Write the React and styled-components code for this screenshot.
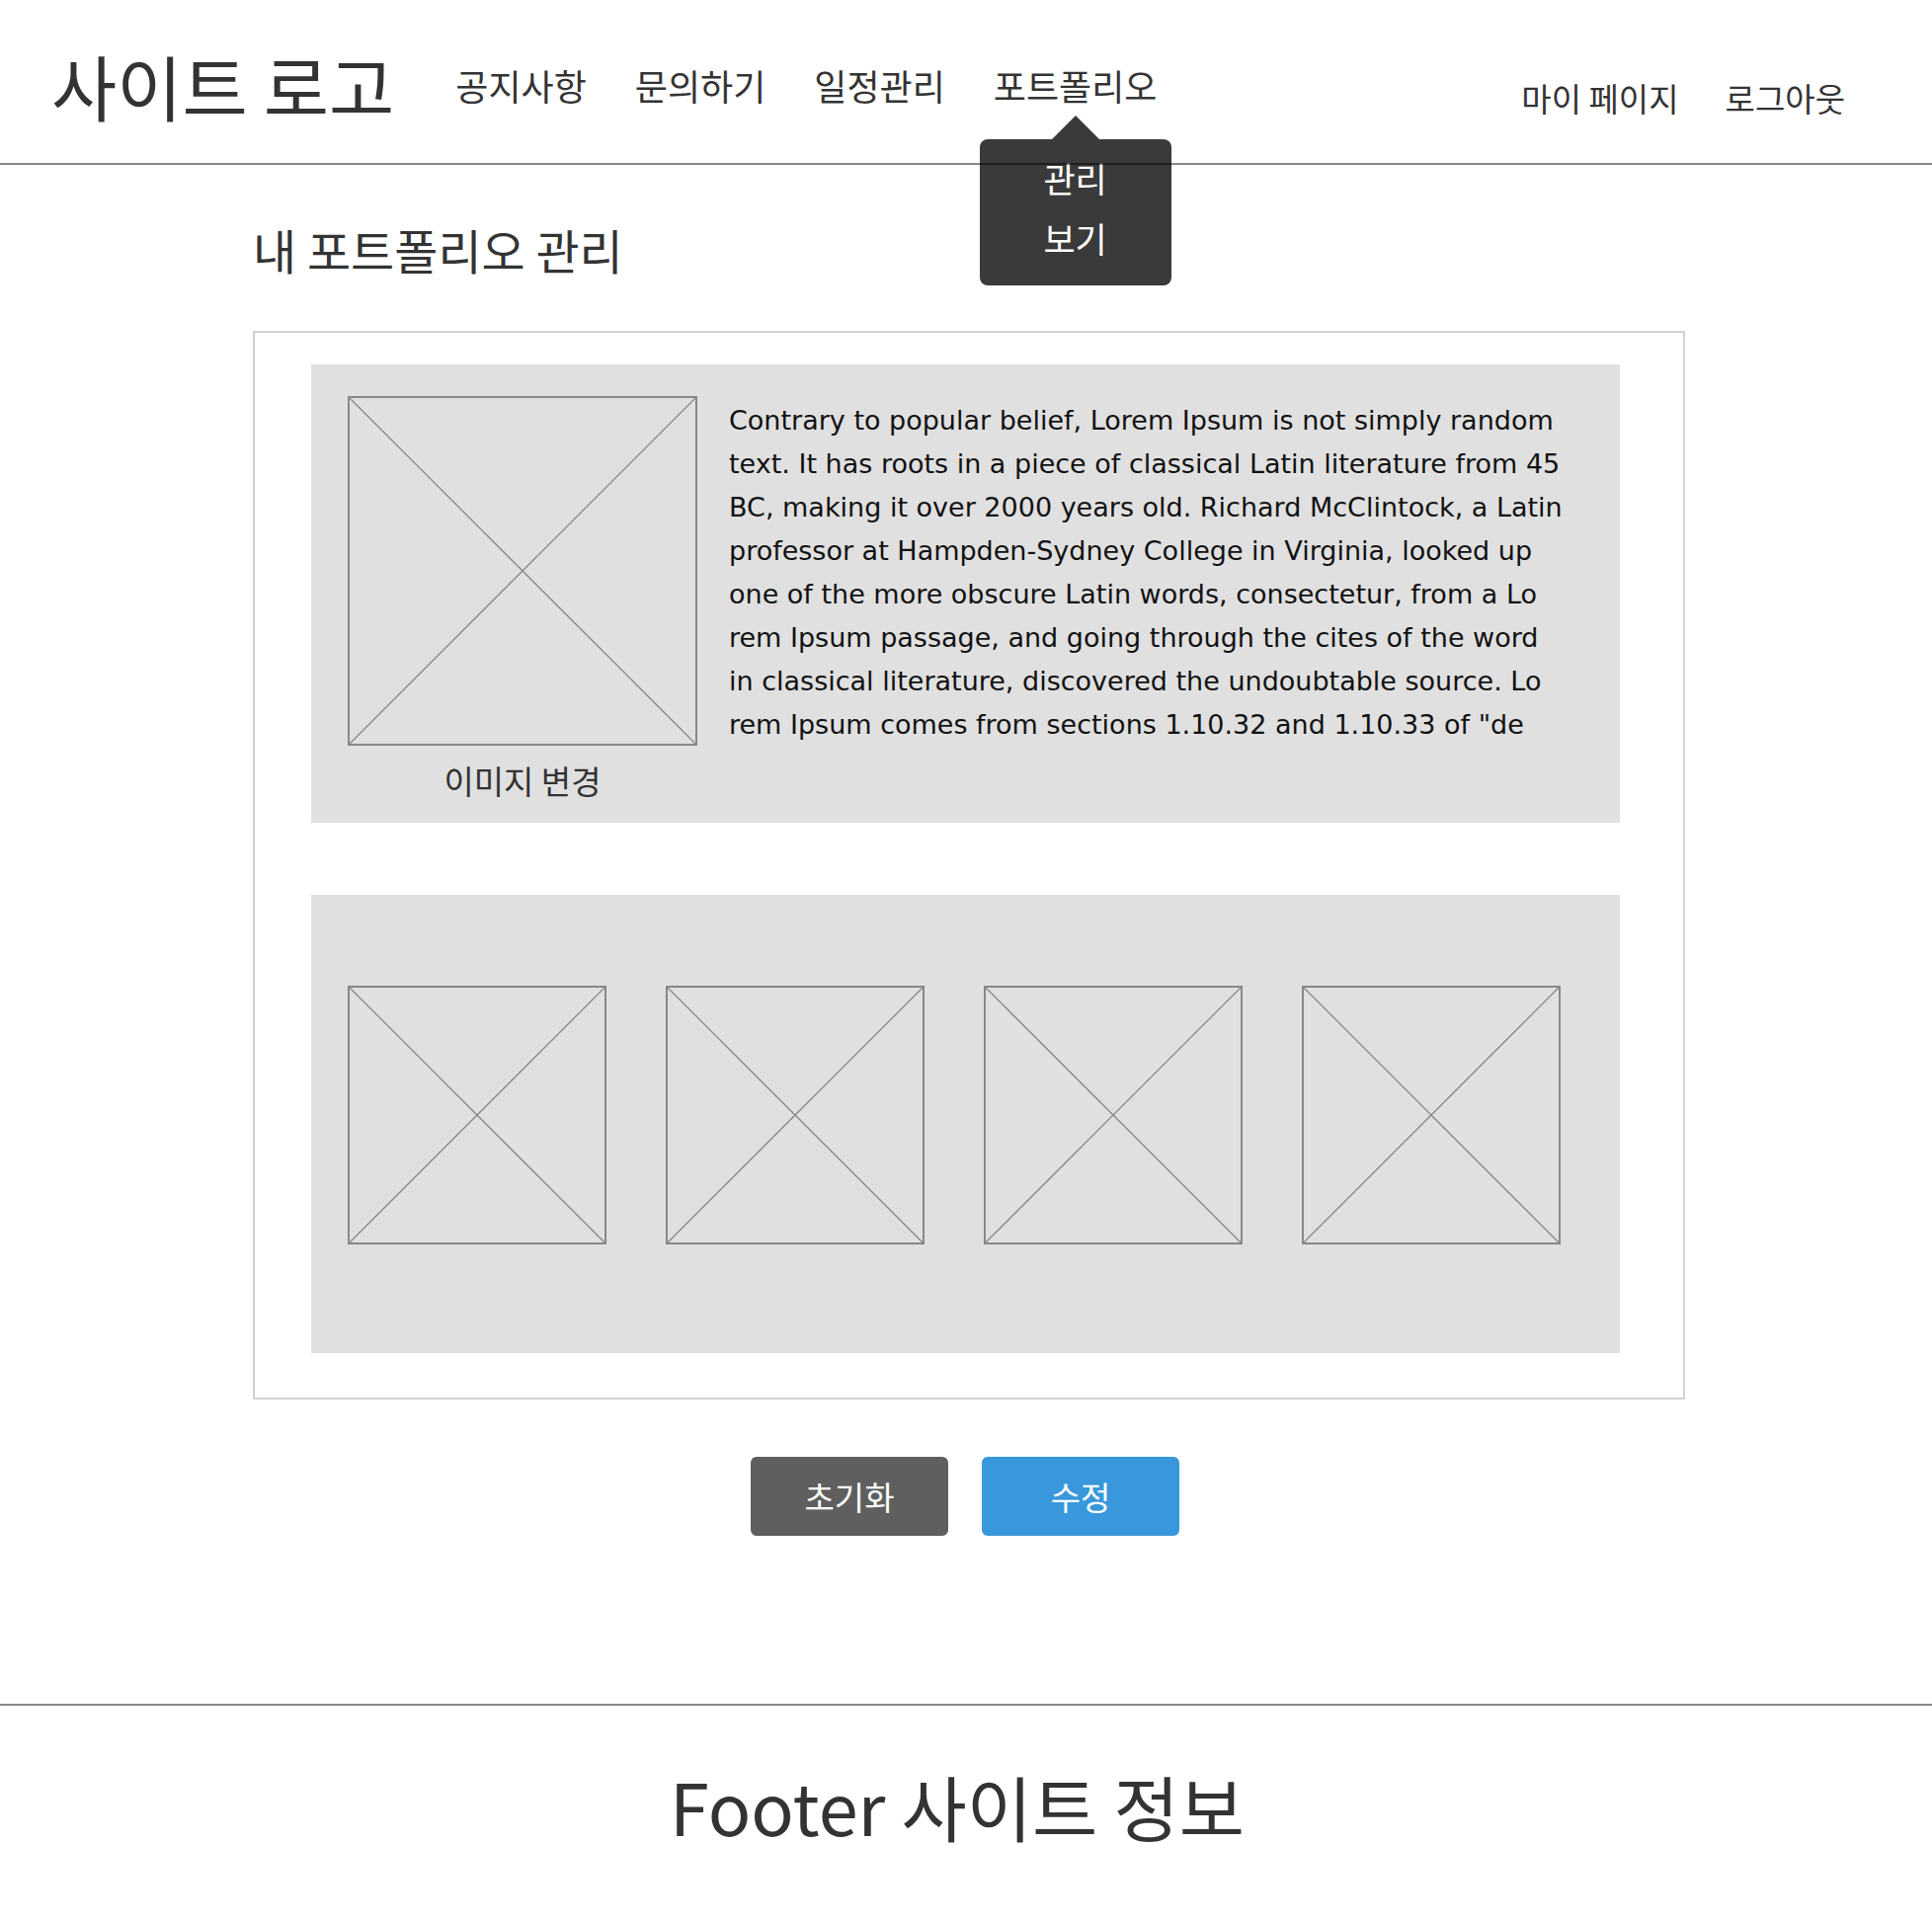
import React from 'react';
import styled, { createGlobalStyle } from 'styled-components';

const GlobalStyle = createGlobalStyle`
    * { box-sizing: border-box; }
    body {
        margin: 0;
        background: #fff;
        color: #333;
        font-family: "Noto Sans CJK KR", "Noto Sans", sans-serif;
    }
`

const Header = styled.header`
    display: flex;
    align-items: center;
    height: 165px;
    padding: 6px 88px 0 52px;
`

const Logo = styled.div`
    font-size: 72px;
    line-height: 100px;
    color: #333;
    white-space: nowrap;
`

const Nav = styled.nav`
    display: flex;
    gap: 49px;
    margin-left: 62px;
`

const NavItem = styled.div`
    position: relative;
    font-size: 36px;
    line-height: 50px;
    color: #333;
    white-space: nowrap;
`

const Dropdown = styled.div`
    position: absolute;
    top: calc(100% + 30px);
    left: 50%;
    transform: translateX(-50%);
    width: 194px;
    padding: 8px 0 18px;
    background: #3a3a3a;
    border-radius: 8px;
    z-index: 1;

    &::before {
        content: '';
        position: absolute;
        top: -24px;
        left: 50%;
        transform: translateX(-50%);
        border-left: 24px solid transparent;
        border-right: 24px solid transparent;
        border-bottom: 24px solid #3a3a3a;
    }
`

const DropdownItem = styled.div`
    font-size: 35px;
    line-height: 61px;
    color: #fff;
    text-align: center;
`

const UserMenu = styled.div`
    display: flex;
    gap: 47px;
    margin-left: auto;
    margin-top: 26px;
`

const UserLink = styled.div`
    font-size: 33px;
    line-height: 44px;
    color: #333;
    white-space: nowrap;
`

const Divider = styled.div`
    position: relative;
    z-index: 2;
    height: 2px;
    background: rgba(0, 0, 0, 0.47);
`

const Content = styled.main`
    width: 1450px;
    margin-left: 256px;
`

const Title = styled.h1`
    margin: 54px 0 52px;
    font-size: 48px;
    font-weight: 400;
    line-height: 62px;
    color: #333;
`

const Panel = styled.section`
    display: flex;
    flex-direction: column;
    gap: 73px;
    padding: 32px 0 45px 57px;
    border: 2px solid #d2d2d2;
`

const GrayBox = styled.div`
    display: flex;
    gap: ${props => props.gap || 0}px;
    width: 1325px;
    height: 464px;
    padding: ${props => props.pad};
    background: #e0e0e0;
`

const ImageColumn = styled.div`
    display: flex;
    flex-direction: column;
    align-items: center;
    width: 354px;
`

const Caption = styled.div`
    margin-top: 13px;
    font-size: 33px;
    line-height: 44px;
    color: #333;
`

const Placeholder = styled.div`
    width: ${props => props.size}px;
    height: ${props => props.size}px;
    flex-shrink: 0;
    border: 2px solid #888;

    svg {
        display: block;
        width: 100%;
        height: 100%;
    }
`

const Description = styled.p`
    width: 848px;
    margin: 3px 0 0;
    font-family: "DejaVu Sans", sans-serif;
    font-size: 27px;
    line-height: 44px;
    color: #111;
`

const Buttons = styled.div`
    display: flex;
    justify-content: center;
    gap: 34px;
    margin: 58px 0 170px;
    padding-right: 8px;
`

const Button = styled.button`
    width: 200px;
    height: 80px;
    border: none;
    border-radius: 6px;
    background: ${props => props.primary ? '#3898db' : '#5f5f5f'};
    color: #fff;
    font-family: "Noto Sans CJK KR", sans-serif;
    font-size: 33px;
    cursor: pointer;
`

const Footer = styled.footer`
    display: flex;
    align-items: center;
    justify-content: center;
    height: 219px;
    padding: 0 18px 16px 0;
    border-top: 2px solid #888;
    font-size: 72px;
    color: #333;
`

const ImageBox = ({ size }) => (
    <Placeholder size={size}>
        <svg viewBox="0 0 100 100" preserveAspectRatio="none">
            <line x1="0" y1="0" x2="100" y2="100" stroke="#888" strokeWidth="1.3" vectorEffect="non-scaling-stroke" />
            <line x1="100" y1="0" x2="0" y2="100" stroke="#888" strokeWidth="1.3" vectorEffect="non-scaling-stroke" />
        </svg>
    </Placeholder>
);

const App = () => {
    const menu = ['공지사항', '문의하기', '일정관리'];

    return (
        <>
            <GlobalStyle />
            <Header>
                <Logo>사이트 로고</Logo>
                <Nav>
                    {menu.map(item => <NavItem key={item}>{item}</NavItem>)}
                    <NavItem>
                        포트폴리오
                        <Dropdown>
                            <DropdownItem>관리</DropdownItem>
                            <DropdownItem>보기</DropdownItem>
                        </Dropdown>
                    </NavItem>
                </Nav>
                <UserMenu>
                    <UserLink>마이 페이지</UserLink>
                    <UserLink>로그아웃</UserLink>
                </UserMenu>
            </Header>
            <Divider />
            <Content>
                <Title>내 포트폴리오 관리</Title>
                <Panel>
                    <GrayBox pad="32px 0 0 37px" gap={32}>
                        <ImageColumn>
                            <ImageBox size={354} />
                            <Caption>이미지 변경</Caption>
                        </ImageColumn>
                        <Description>
                            Contrary to popular belief, Lorem Ipsum is not simply random text. It has roots in a piece of classical Latin literature from 45 BC, making it over 2000 years old. Richard McClintock, a Latin professor at Hampden-Sydney College in Virginia, looked up one of the more obscure Latin words, consectetur, from a Lo<wbr />rem Ipsum passage, and going through the cites of the word in classical literature, discovered the undoubtable source. Lo<wbr />rem Ipsum comes from sections 1.10.32 and 1.10.33 of "de
                        </Description>
                    </GrayBox>
                    <GrayBox pad="92px 0 0 37px" gap={60}>
                        {[1, 2, 3, 4].map(n => <ImageBox key={n} size={262} />)}
                    </GrayBox>
                </Panel>
                <Buttons>
                    <Button>초기화</Button>
                    <Button primary>수정</Button>
                </Buttons>
            </Content>
            <Footer>Footer 사이트 정보</Footer>
        </>
    );
}

export default App;
